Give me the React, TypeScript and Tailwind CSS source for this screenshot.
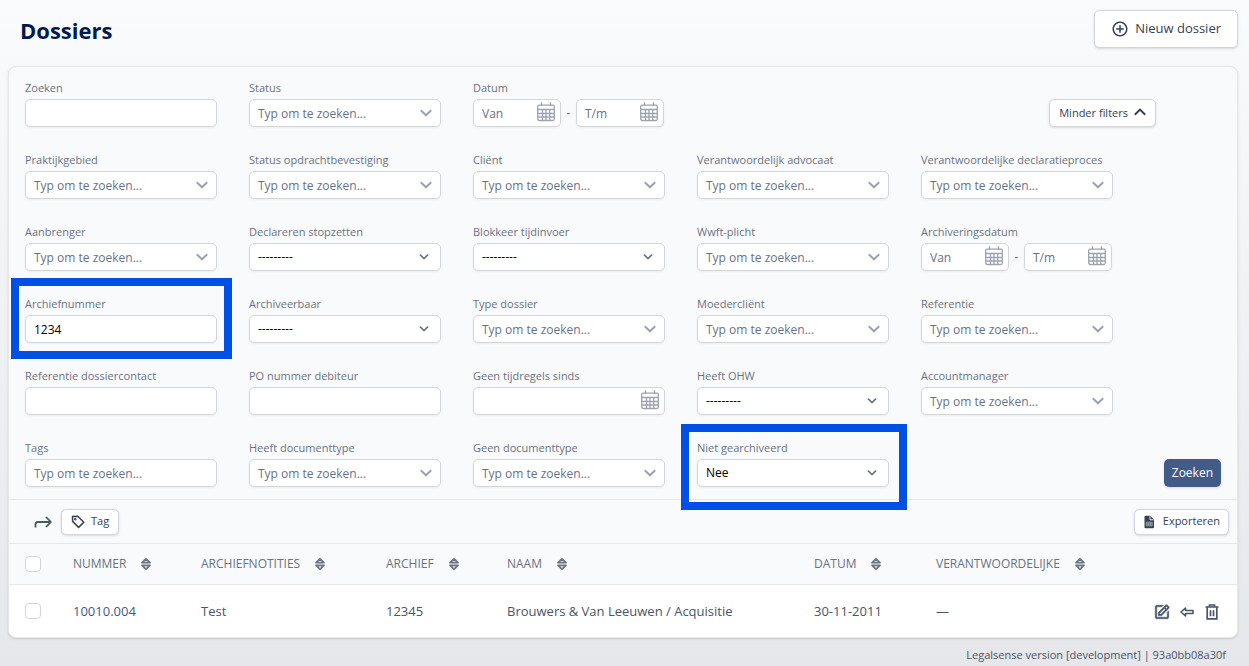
import React, { useId } from "react";
import type { ReactNode } from "react";
import { BiEdit, BiPlusCircle } from "react-icons/bi";

const box =
  "h-7 w-full rounded-[5px] border border-gray-300 bg-white px-2 text-xs shadow-xs placeholder:text-gray-500";

function Chevron({ dark = false }: { dark?: boolean }) {
  return dark ? (
    <svg viewBox="0 0 10 10" className="pointer-events-none absolute top-[9px] right-3 size-2.5" fill="none" stroke="#6b7280" strokeWidth="1.6" aria-hidden="true">
      <path d="M1 2.600 5 6.600 9 2.600" />
    </svg>
  ) : (
    <svg viewBox="0 0 12 12" className="pointer-events-none absolute top-2 right-[9px] size-3" fill="none" stroke="#9ca3af" strokeWidth="2" aria-hidden="true">
      <path d="M.8 3.300 6 8.300l5.200-5" />
    </svg>
  );
}

function Calendar() {
  return (
    <svg viewBox="0 0 18 20" className="pointer-events-none absolute top-[3px] right-1.5 h-5 w-[18px]" fill="none" stroke="#9ca3af" strokeWidth="1.300" aria-hidden="true">
      <rect x="0.700" y="3.200" width="16.600" height="15.300" rx="1.500" />
      <path d="M4.500 .3v3.500M13.500 .3v3.500M1 7.500h16M1 11.500h16M1 15h16M5.500 7.500v11M9 7.500v11M12.800 7.500v11" />
    </svg>
  );
}

type FieldProps = {
  label: string;
  kind?: "text" | "search" | "select" | "date" | "tags" | "range";
  value?: string;
  marker?: ReactNode;
};

function Field({ label, kind = "search", value, marker }: FieldProps) {
  const id = useId();
  return (
    <div className="relative w-48">
      <label htmlFor={id} className="block h-5 text-[11px] leading-[18px] whitespace-nowrap text-gray-500">
        {label}
      </label>
      {kind === "range" ? (
        <div className="flex items-center text-xs text-gray-500">
          <div className="relative w-[88px]">
            <input id={id} className={box} placeholder="Van" />
            <Calendar />
          </div>
          <span className="w-[15px] text-center">-</span>
          <div className="relative w-[88px]">
            <input aria-label={`${label} t/m`} className={box} placeholder="T/m" />
            <Calendar />
          </div>
        </div>
      ) : (
        <div className="relative">
          {kind === "select" ? (
            <select id={id} className={`${box} appearance-none text-black`}>
              <option>{value ?? "---------"}</option>
            </select>
          ) : (
            <input
              id={id}
              className={`${box} text-black`}
              defaultValue={value}
              placeholder={kind === "search" || kind === "tags" ? "Typ om te zoeken..." : undefined}
            />
          )}
          {kind === "search" && <Chevron />}
          {kind === "select" && <Chevron dark />}
          {kind === "date" && <Calendar />}
        </div>
      )}
      {marker}
    </div>
  );
}

const middle: FieldProps[] = [
  { label: "Praktijkgebied" },
  { label: "Status opdrachtbevestiging" },
  { label: "Cliënt" },
  { label: "Verantwoordelijk advocaat" },
  { label: "Verantwoordelijke declaratieproces" },
  { label: "Aanbrenger" },
  { label: "Declareren stopzetten", kind: "select" },
  { label: "Blokkeer tijdinvoer", kind: "select" },
  { label: "Wwft-plicht" },
  { label: "Archiveringsdatum", kind: "range" },
  {
    label: "Archiefnummer",
    kind: "text",
    value: "1234",
    marker: <div className="pointer-events-none absolute -top-[17px] -right-[15px] -bottom-4 -left-3.5 border-8 border-[#0050e6]" />,
  },
  { label: "Archiveerbaar", kind: "select" },
  { label: "Type dossier" },
  { label: "Moedercliënt" },
  { label: "Referentie" },
  { label: "Referentie dossiercontact", kind: "text" },
  { label: "PO nummer debiteur", kind: "text" },
  { label: "Geen tijdregels sinds", kind: "date" },
  { label: "Heeft OHW", kind: "select" },
  { label: "Accountmanager" },
];

const columns = [
  { name: "Nummer", width: "w-32" },
  { name: "Archiefnotities", width: "w-[185px]" },
  { name: "Archief", width: "w-[121px]" },
  { name: "Naam", width: "w-[307px]" },
  { name: "Datum", width: "w-[122px]" },
  { name: "Verantwoordelijke", width: "w-[190px]" },
];

const button =
  "flex items-center rounded-[5px] border border-gray-300 bg-white text-gray-700 shadow-sm";

function Sort() {
  return (
    <svg viewBox="0 0 12 14" className="h-3.5 w-3" fill="none" stroke="#6b7280" strokeWidth="1.700" strokeLinejoin="round" aria-hidden="true">
      <path d="M6 1.800 10 5.700H2zM6 12.200l4-3.900H2z" />
    </svg>
  );
}

export default function App() {
  return (
    <div className="min-h-screen bg-linear-to-b from-[#fafbfc] to-[#e5e7eb] pr-[11px] pl-2 font-['Open_Sans','Noto_Sans',sans-serif]">
      <header className="flex h-[66px] items-start justify-between pt-2.5 pl-3">
        <h1 className="text-[22px] leading-10 font-bold text-[#001a4f]">Dossiers</h1>
        <button className={`${button} h-[38px] gap-1.5 px-4 text-[13px]`}>
          <BiPlusCircle className="size-[18px]" />
          Nieuw dossier
        </button>
      </header>

      <main className="overflow-hidden rounded-lg border border-gray-200 bg-[#f9fafc] shadow-sm">
        <form className="flex flex-col gap-6 px-4 py-3" onSubmit={(e) => e.preventDefault()}>
          <div className="flex items-end gap-8">
            <Field label="Zoeken" kind="text" />
            <Field label="Status" />
            <Field label="Datum" kind="range" />
            <button type="button" className={`${button} mr-[65px] ml-auto h-7 gap-1.5 px-[9px] text-[11px]`}>
              Minder filters
              <svg viewBox="0 0 12 12" className="size-3" fill="none" stroke="currentColor" strokeWidth="2" aria-hidden="true">
                <path d="M.8 7.800 6 2.600l5.200 5.200" />
              </svg>
            </button>
          </div>
          <div className="grid grid-cols-[repeat(auto-fill,192px)] gap-x-8 gap-y-6">
            {middle.map((f) => (
              <Field key={f.label} {...f} />
            ))}
          </div>
          <div className="flex items-end gap-8">
            <Field label="Tags" kind="tags" />
            <Field label="Heeft documenttype" />
            <Field label="Geen documenttype" />
            <Field
              label="Niet gearchiveerd"
              kind="select"
              value="Nee"
              marker={<div className="pointer-events-none absolute -top-[15px] -right-[18px] -bottom-[23px] -left-4 z-10 border-8 border-[#0050e6]" />}
            />
            <button className="ml-auto h-7 rounded-[5px] bg-[#435b87] px-2 text-xs text-white shadow-sm">Zoeken</button>
          </div>
        </form>

        <div className="flex h-[45px] items-center border-y border-gray-200 pr-2 pl-[25px]">
          <button aria-label="Verplaatsen" className="mr-[9px] text-gray-600">
            <svg viewBox="0 0 18 14" className="h-3.5 w-[18px]" fill="none" stroke="currentColor" strokeWidth="1.800" aria-hidden="true">
              <path d="M1.500 12.500V9.500q0-2.500 2.500-2.500h12.500M12 2l4.800 5-4.800 5" />
            </svg>
          </button>
          <button className={`${button} h-[26px] gap-1.5 px-[9px] text-[11px]`}>
            <svg viewBox="0 0 14 14" className="size-3.5" fill="none" stroke="currentColor" strokeWidth="1.500" strokeLinejoin="round" aria-hidden="true">
              <path d="M1.500 1.500 6.800 1.200l6 6-5.200 5.200-6-6z" />
              <circle cx="4.200" cy="4.200" r=".5" />
            </svg>
            Tag
          </button>
          <button className={`${button} ml-auto h-[26px] gap-2 px-2 text-[11px]`}>
            <svg viewBox="0 0 12 14" className="h-3.5 w-3" aria-hidden="true">
              <path d="M2.500 .8h4.700l3.800 3.800v7.600q0 1-1 1H2.500q-1 0-1-1V1.800q0-1 1-1z" fill="#374151" />
              <path d="M7 1.300V4.800h3.500" fill="none" stroke="#fff" strokeWidth=".9" />
              <path d="M3.300 7.200h5.900v3.600H3.300zM5.300 7.200v3.600M7.300 7.200v3.600M3.300 9h5.900" fill="none" stroke="#cbd0d8" strokeWidth=".6" />
            </svg>
            Exporteren
          </button>
        </div>

        <table className="w-full table-fixed text-left text-[13px] text-gray-600">
          <thead>
            <tr className="h-10 border-b border-gray-200 text-gray-500 uppercase">
              <th className="w-12 pl-4">
                <input type="checkbox" aria-label="Alles selecteren" className="block size-4 appearance-none rounded border border-gray-300 bg-white" />
              </th>
              {columns.map((c) => (
                <th key={c.name} className={`${c.width} pl-4 text-xs font-normal`}>
                  <button className="flex items-center gap-3.5 uppercase">
                    {c.name}
                    <Sort />
                  </button>
                </th>
              ))}
              <th aria-label="Acties" />
            </tr>
          </thead>
          <tbody>
            <tr className="h-[53px] bg-white">
              <td className="pl-4">
                <input type="checkbox" aria-label="Selecteer 10010.004" className="block size-4 appearance-none rounded border border-gray-300 bg-white" />
              </td>
              <td className="pt-0.5 pl-4">
                <a href="#10010.004" className="text-[#435b87]">10010.004</a>
              </td>
              <td className="pt-0.5 pl-4">Test</td>
              <td className="pt-0.5 pl-4">12345</td>
              <td className="pt-0.5 pl-4">Brouwers &amp; Van Leeuwen / Acquisitie</td>
              <td className="pt-0.5 pl-4">30-11-2011</td>
              <td className="pt-0.5 pl-4">—</td>
              <td className="pt-0.5 pr-4">
                <div className="flex items-center justify-end gap-2">
                  <button aria-label="Bewerken"><BiEdit className="size-[18px] stroke-current stroke-[0.7]" /></button>
                  <button aria-label="Terugzetten">
                    <svg viewBox="0 0 16 16" className="size-4" fill="none" stroke="currentColor" strokeWidth="1.600" strokeLinejoin="round" aria-hidden="true">
                      <path d="M2 8l4.500-4v2.500H14v3H6.500V12z" />
                    </svg>
                  </button>
                  <button aria-label="Verwijderen">
                    <svg viewBox="0 0 18 18" className="size-[18px]" fill="none" stroke="currentColor" strokeWidth="1.700" aria-hidden="true">
                      <path d="M2.500 4h13M6.500 3.500V2h5v1.500M4.200 4.500v11.300h9.600V4.500M7.500 7.200v6M10.500 7.200v6" />
                    </svg>
                  </button>
                </div>
              </td>
            </tr>
          </tbody>
        </table>
      </main>
      <footer className="pt-[9px] pr-3 text-right text-[11px] leading-4 text-gray-600">Legalsense version [development] | 93a0bb08a30f</footer>
    </div>
  );
}
